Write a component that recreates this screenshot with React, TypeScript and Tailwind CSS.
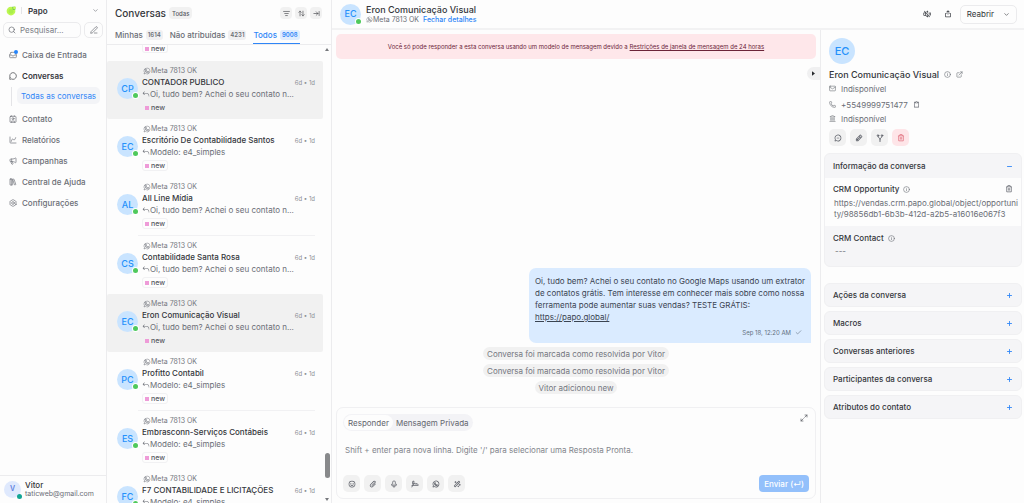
import type { ReactNode } from 'react';
import {
  ArrowRightToLine,
  ArrowUpDown,
  Bolt,
  ChartSpline,
  Check,
  ChevronDown,
  Contact,
  ExternalLink,
  Inbox,
  Info,
  Landmark,
  LibraryBig,
  ListFilter,
  Mail,
  Maximize2,
  Megaphone,
  MessageCircle,
  Minus,
  PenLine,
  Phone,
  Plus,
  Search,
} from 'lucide-react';
import {
  PiArrowBendUpLeft,
  PiChatCircleDotsBold,
  PiClipboardBold,
  PiExportBold,
  PiMagicWandBold,
  PiMicrophoneBold,
  PiPaperclipBold,
  PiPencilBold,
  PiSignatureBold,
  PiSmileyBold,
  PiSpeakerSlashBold,
  PiTrashBold,
  PiWhatsappLogo,
  PiWhatsappLogoBold,
} from 'react-icons/pi';

type Conversation = {
  initials: string;
  name: string;
  message: string;
  highlighted?: boolean;
  divider?: boolean;
};

const GREETING = 'Oi, tudo bem? Achei o seu contato n...';
const TEMPLATE = 'Modelo: e4_simples';

const conversations: Conversation[] = [
  { initials: 'CP', name: 'CONTADOR PUBLICO', message: GREETING, highlighted: true },
  { initials: 'EC', name: 'Escritório De Contabilidade Santos', message: TEMPLATE },
  { initials: 'AL', name: 'All Line Mídia', message: GREETING, divider: true },
  { initials: 'CS', name: 'Contabilidade Santa Rosa', message: GREETING },
  { initials: 'EC', name: 'Eron Comunicação Visual', message: GREETING, highlighted: true },
  { initials: 'PC', name: 'Profitto Contabil', message: TEMPLATE, divider: true },
  { initials: 'ES', name: 'Embrasconn-Serviços Contábeis', message: TEMPLATE },
  { initials: 'FC', name: 'F7 CONTABILIDADE E LICITAÇÕES', message: TEMPLATE },
];

function Avatar({ initials, online = true, large = false }: { initials: string; online?: boolean; large?: boolean }) {
  return (
    <span
      className={`relative flex shrink-0 items-center justify-center rounded-full bg-[#c9e4ff] font-medium text-[#2591fb] ${
        large ? 'size-[26px] text-[11px]' : 'size-[21px] text-[9px]'
      }`}
    >
      {initials}
      {online && (
        <span className="absolute -right-px bottom-0 flex size-[7px] items-center justify-center rounded-full bg-white">
          <span className="size-[5px] rounded-full bg-[#4fc95c]" />
        </span>
      )}
    </span>
  );
}

function NewLabel() {
  return (
    <span className="flex h-[11px] items-center gap-[2px] rounded-[3px] border border-[#f1f1f3] px-[2px] text-[7px]/[9px] font-medium text-[#55585f]">
      <span className="size-1 bg-[#ee9bd8]" />
      new
    </span>
  );
}

function ConversationRow({ item }: { item: Conversation }) {
  return (
    <li className={item.highlighted ? 'rounded-[2px] bg-[#f1f1f1]' : ''}>
      <a href="#conversa" className="flex h-[58px] pl-[10px]">
        <span className="mt-[17px]">
          <Avatar initials={item.initials} />
        </span>
        <span className="ml-[4px] flex min-w-0 flex-1 flex-col pr-2 pt-[5px]">
          <span className="flex h-[10px] items-center pl-px text-[7px] text-[#74777f]">
            <PiWhatsappLogo className="size-2" />
            Meta 7813 OK
          </span>
          <span className="flex h-3 items-center justify-between">
            <span className="whitespace-nowrap text-[8px] font-medium text-[#34363b]">{item.name}</span>
            <span className="shrink-0 text-[6px] text-[#8d9097]">6d • 1d</span>
          </span>
          <span className="flex h-3 items-center whitespace-nowrap text-[8px] text-[#6b6e76]">
            <PiArrowBendUpLeft className="size-2 shrink-0" />
            {item.message}
          </span>
          <span className="mt-[2px] flex">
            <NewLabel />
          </span>
        </span>
      </a>
      {item.divider && <div className="ml-[31px] mr-2 h-px bg-[#f1f1f3]" />}
    </li>
  );
}

function NavItem({ icon, label, active = false }: { icon: ReactNode; label: string; active?: boolean }) {
  return (
    <a
      href="#nav"
      className={`flex h-[17px] items-center gap-[5px] pl-[5px] text-[8px] ${
        active ? 'font-semibold text-[#34363b]' : 'font-medium text-[#6b6e76]'
      }`}
    >
      {icon}
      {label}
    </a>
  );
}

function Sidebar() {
  return (
    <aside className="flex w-[107px] shrink-0 flex-col border-r border-[#ececee]">
      <div className="flex h-[21px] items-center px-[6px]">
        <svg viewBox="0 0 16 16" className="size-[10px]" role="img" aria-label="Papo">
          <circle cx="8" cy="8" r="7" fill="#bdf751" />
          <circle cx="8" cy="8.500" r="4" fill="#a9ee4b" />
          <path d="M10 1h5v5h-4z" fill="#60b85a" />
          <circle cx="13.500" cy="3" r="2.200" fill="#c4fb52" />
        </svg>
        <span className="ml-[5px] h-[7px] w-px bg-[#e4e4e7]" />
        <button type="button" className="ml-[6px] flex flex-1 items-center justify-between text-[8px] font-semibold text-[#34363b]">
          Papo
          <ChevronDown className="mr-px size-[7px] text-[#6b6e76]" />
        </button>
      </div>
      <div className="mt-px flex gap-[3px] px-[3px]">
        <label className="flex h-4 min-w-0 flex-1 items-center gap-1 rounded-[5px] border border-[#ebebed] px-1 text-[#63666e]">
          <Search className="size-2 shrink-0" />
          <input
            aria-label="Pesquisar"
            placeholder="Pesquisar..."
            className="w-full min-w-0 text-[8px] outline-none placeholder:text-[#7b7e86]"
          />
        </label>
        <button type="button" aria-label="Nova conversa" className="flex h-4 w-[19px] items-center justify-center rounded-[5px] border border-[#ebebed] text-[#63666e]">
          <PenLine className="size-2" />
        </button>
      </div>
      <nav className="mt-2 flex flex-1 flex-col gap-1 px-1">
        <NavItem
          label="Caixa de Entrada"
          icon={
            <span className="relative">
              <Inbox className="size-2" />
              <span className="absolute -right-px -top-px size-1 rounded-full bg-[#2384fa]" />
            </span>
          }
        />
        <div className="flex flex-col">
          <NavItem label="Conversas" active icon={<MessageCircle className="size-2" />} />
          <div className="ml-[7px] mt-[3px] flex h-[19px] items-start border-l border-[#e4e4e7] pl-[5px]">
            <a href="#todas" className="flex h-[17px] items-center whitespace-nowrap rounded-[5px] bg-[#f3f4f7] px-1 text-[8px] text-[#2f86f7]">
              Todas as conversas
            </a>
          </div>
        </div>
        <NavItem label="Contato" icon={<Contact className="size-2" />} />
        <NavItem label="Relatórios" icon={<ChartSpline className="size-2" />} />
        <NavItem label="Campanhas" icon={<Megaphone className="size-2" />} />
        <NavItem label="Central de Ajuda" icon={<LibraryBig className="size-2" />} />
        <NavItem label="Configurações" icon={<Bolt className="size-2" />} />
      </nav>
      <button type="button" className="flex h-7 items-center gap-[4px] border-t border-[#ececee] pl-1 text-left">
        <span className="relative flex size-[17px] items-center justify-center rounded-full bg-[#dfe9fd] text-[7px] font-semibold text-[#5b7fe0]">
          V
          <span className="absolute -bottom-px -right-px size-[5px] rounded-full bg-[#12a594]" />
        </span>
        <span className="flex flex-col">
          <span className="text-[8px]/[9px] font-medium text-[#34363b]">Vitor</span>
          <span className="text-[7px]/[8px] text-[#6b6e76]">taticweb@gmail.com</span>
        </span>
      </button>
    </aside>
  );
}

function Tab({ label, count, active = false }: { label: string; count: string; active?: boolean }) {
  return (
    <button
      type="button"
      role="tab"
      aria-selected={active}
      className={`flex h-full items-center gap-[3px] border-b text-[8px] font-medium ${
        active ? 'border-[#2f86f7] text-[#2f86f7]' : 'border-transparent text-[#6b6e76]'
      }`}
    >
      {label}
      <span className={`flex h-[10px] items-center rounded-[3px] px-[2px] text-[6px] font-semibold ${active ? 'bg-[#dfedfe]' : 'bg-[#f0f0f2]'}`}>
        {count}
      </span>
    </button>
  );
}

function SquareButton({ label, children, tone = 'plain' }: { label: string; children: ReactNode; tone?: 'plain' | 'danger' }) {
  return (
    <button
      type="button"
      aria-label={label}
      className={`flex size-[17px] items-center justify-center rounded-[5px] ${
        tone === 'danger' ? 'bg-[#fee5e8] text-[#e0707e]' : 'bg-[#f1f1f1] text-[#63666e]'
      }`}
    >
      {children}
    </button>
  );
}

function SmallButton({ label, children }: { label: string; children: ReactNode }) {
  return (
    <button type="button" aria-label={label} className="flex size-3 items-center justify-center rounded-[4px] bg-[#f1f1f1] text-[#34363b]">
      {children}
    </button>
  );
}

function ConversationList() {
  return (
    <section className="flex w-[225px] shrink-0 flex-col border-r border-[#ececee]">
      <header className="flex h-[26px] shrink-0 items-center gap-[3px] pl-2 pr-[9px]">
        <h1 className="text-[10px] font-medium text-[#34363b]">Conversas</h1>
        <span className="flex h-3 items-center rounded-[4px] bg-[#f1f1f1] px-[3px] text-[6px] font-medium text-[#55585f]">Todas</span>
        <div className="ml-auto flex gap-[3px]">
          <SmallButton label="Filtrar">
            <ListFilter className="size-[7px]" />
          </SmallButton>
          <SmallButton label="Ordenar">
            <ArrowUpDown className="size-[7px]" />
          </SmallButton>
          <SmallButton label="Expandir">
            <ArrowRightToLine className="size-[7px]" />
          </SmallButton>
        </div>
      </header>
      <div role="tablist" className="flex h-[19px] shrink-0 gap-[7px] border-b border-[#ececee] pl-2">
        <Tab label="Minhas" count="1614" />
        <Tab label="Não atribuídas" count="4231" />
        <Tab label="Todos" count="9008" active />
      </div>
      <div className="flex min-h-0 flex-1">
        <div className="min-w-0 flex-1 overflow-hidden">
          <div className="flex h-4 items-start pl-[35px]">
            <span className="flex h-2 items-center gap-[2px] rounded-b-[3px] border-x border-b border-[#f1f1f3] px-[2px] text-[7px]/[7px] font-medium text-[#55585f]">
              <span className="size-1 bg-[#ee9bd8]" />
              new
            </span>
          </div>
          <ul>
            {conversations.map((item) => (
              <ConversationRow key={item.name} item={item} />
            ))}
          </ul>
        </div>
        <div aria-hidden="true" className="flex w-2 shrink-0 flex-col items-center pb-[2px] pt-[3px]">
          <svg viewBox="0 0 4 3" className="h-[3px] w-1 fill-[#77797d]">
            <path d="M2 0 4 3H0z" />
          </svg>
          <div className="flex-[402]" />
          <div className="h-[25px] w-[5px] rounded-full bg-[#88898b]" />
          <div className="flex-[20]" />
          <svg viewBox="0 0 4 3" className="h-[3px] w-1 fill-[#77797d]">
            <path d="M0 0h4L2 3z" />
          </svg>
        </div>
      </div>
    </section>
  );
}

function ChatHeader() {
  return (
    <header className="flex h-[30px] shrink-0 items-center border-b-2 border-[#f2f2f3] pl-2 pr-[7px]">
      <Avatar initials="EC" />
      <div className="ml-[5px] flex flex-col">
        <h2 className="text-[9px]/[11px] font-medium text-[#34363b]">Eron Comunicação Visual</h2>
        <div className="flex h-[9px] items-center text-[7px]/[9px] text-[#6b6e76]">
          <PiWhatsappLogo className="size-[7px]" />
          Meta 7813 OK
          <a href="#detalhes" className="ml-1 font-medium text-[#2f86f7]">
            Fechar detalhes
          </a>
        </div>
      </div>
      <div className="ml-auto flex items-center">
        <button type="button" aria-label="Silenciar" className="text-[#44474d]">
          <PiSpeakerSlashBold className="size-2" />
        </button>
        <button type="button" aria-label="Enviar transcrição" className="ml-[13px] text-[#44474d]">
          <PiExportBold className="size-2" />
        </button>
        <div className="ml-2 flex h-[19px] items-center rounded-[5px] border border-[#ebebed] text-[#34363b]">
          <button type="button" className="pl-[6px] pr-2 text-[8px]">
            Reabrir
          </button>
          <button type="button" aria-label="Mais opções" className="pl-px pr-[6px]">
            <ChevronDown className="size-[7px]" />
          </button>
        </div>
      </div>
    </header>
  );
}

function ActivityPill({ children }: { children: ReactNode }) {
  return <p className="flex h-[13px] items-center rounded-full bg-[#f1f1f1] px-1 text-[8px] text-[#74777f]">{children}</p>;
}

function Composer() {
  return (
    <form className="m-1 flex h-[92px] shrink-0 flex-col rounded-[7px] border border-[#f0f0f2] px-[6px] py-[6px]">
      <div className="flex items-start justify-between">
        <div className="flex h-[17px] items-center rounded-full bg-[#f3f3f6] p-px text-[8px] text-[#63666e]">
          <button type="button" className="h-full rounded-full bg-[#fdfdfd] px-1">
            Responder
          </button>
          <button type="button" className="h-full px-[3px]">
            Mensagem Privada
          </button>
        </div>
        <button type="button" aria-label="Expandir editor" className="mr-px text-[#55585f]">
          <Maximize2 className="size-2" />
        </button>
      </div>
      <textarea
        aria-label="Mensagem"
        placeholder="Shift + enter para nova linha. Digite '/' para selecionar uma Resposta Pronta."
        className="mt-[13px] min-h-0 flex-1 resize-none pl-[2px] text-[8px]/[12px] outline-none placeholder:text-[#82858c]"
      />
      <div className="flex items-center justify-between">
        <div className="flex gap-1">
          <SquareButton label="Emoji">
            <PiSmileyBold className="size-2" />
          </SquareButton>
          <SquareButton label="Anexar">
            <PiPaperclipBold className="size-2" />
          </SquareButton>
          <SquareButton label="Gravar áudio">
            <PiMicrophoneBold className="size-2" />
          </SquareButton>
          <SquareButton label="Assinatura">
            <PiSignatureBold className="size-2" />
          </SquareButton>
          <SquareButton label="Modelos do WhatsApp">
            <PiWhatsappLogoBold className="size-2" />
          </SquareButton>
          <SquareButton label="Assistente">
            <PiMagicWandBold className="size-2" />
          </SquareButton>
        </div>
        <button type="button" className="h-[17px] rounded-[4px] bg-[#93c0fb] px-[5px] text-[8px] font-medium text-white">
          Enviar (↵)
        </button>
      </div>
    </form>
  );
}

function Chat() {
  return (
    <main className="flex min-w-0 flex-1 flex-col">
      <div className="mx-1 mt-1 flex h-[25px] shrink-0 items-center justify-center gap-[2px] rounded-[5px] bg-[#fee7ea] text-[6px] text-[#6b2438]">
        <span>Você só pode responder a esta conversa usando um modelo de mensagem devido a</span>
        <a href="#restricoes" className="underline">
          Restrições de janela de mensagem de 24 horas
        </a>
      </div>
      <button
        type="button"
        aria-label="Recolher painel"
        className="mt-2 flex h-[13px] w-[13px] items-center justify-center self-end rounded-l-full bg-[#f0f0f1] text-[#26282c]"
      >
        <svg viewBox="0 0 4 6" className="h-[5px] w-[3px] fill-current">
          <path d="M0 0l4 3-4 3z" />
        </svg>
      </button>
      <div className="flex min-h-0 flex-1 flex-col justify-end pb-[9px]">
        <article className="mr-[9px] flex flex-col self-end rounded-[7px] rounded-br-none bg-[#daebff] px-[6px] pb-[6px] pt-[7px] text-[#3a4452]">
          <p className="whitespace-nowrap text-[8px]/[12px]">
            Oi, tudo bem? Achei o seu contato no Google Maps usando um extrator
            <br />
            de contatos grátis. Tem interesse em conhecer mais sobre como nossa
            <br />
            ferramenta pode aumentar suas vendas? TESTE GRÁTIS:
            <br />
            <a href="#papo" className="underline">
              https://papo.global/
            </a>
          </p>
          <span className="mt-1 flex h-[10px] items-center justify-end gap-1 pr-[3px] text-[6px] text-[#63707f]">
            Sep 18, 12:20 AM
            <Check className="size-[7px]" />
          </span>
        </article>
        <div className="mt-1 flex flex-col items-center gap-1">
          <ActivityPill>Conversa foi marcada como resolvida por Vitor</ActivityPill>
          <ActivityPill>Conversa foi marcada como resolvida por Vitor</ActivityPill>
          <ActivityPill>Vitor adicionou new</ActivityPill>
        </div>
      </div>
      <Composer />
    </main>
  );
}

function Section({ title }: { title: string }) {
  return (
    <button type="button" className="flex h-6 items-center justify-between rounded-[6px] border border-[#f0f0f2] bg-[#f5f5f7] px-2 text-[8px] font-medium text-[#34363b]">
      {title}
      <Plus className="size-[7px] text-[#2f86f7]" strokeWidth={3} />
    </button>
  );
}

function MergeContactsIcon() {
  return (
    <svg viewBox="0 0 16 16" className="size-2 fill-none stroke-current" strokeWidth="2" strokeLinecap="round">
      <circle cx="4" cy="3" r="1.500" />
      <circle cx="12" cy="3" r="1.500" />
      <path d="M4 5c0 3 4 2.500 4 5.500V15M12 5c0 3-4 2.500-4 5.500" />
    </svg>
  );
}

function ContactPanel() {
  return (
    <aside className="flex w-[204px] shrink-0 flex-col border-l border-[#ececee] pl-[3px] pr-[2px] pt-2">
      <div className="flex flex-col pl-[5px]">
        <Avatar initials="EC" large online={false} />
        <div className="mt-1 flex h-[13px] items-center gap-[5px] text-[#6b6e76]">
          <h3 className="text-[9px] font-medium text-[#34363b]">Eron Comunicação Visual</h3>
          <Info className="size-[7px]" />
          <ExternalLink className="size-[7px]" />
        </div>
        <div className="mt-px flex h-[13px] items-center gap-[5px] text-[8px] text-[#6b6e76]">
          <Mail className="size-[7px]" />
          Indisponível
        </div>
        <div className="mt-[2px] flex h-[15px] items-center gap-[5px] text-[8px] text-[#6b6e76]">
          <Phone className="size-[7px]" />
          +5549999751477
          <button type="button" aria-label="Copiar telefone">
            <PiClipboardBold className="size-[7px]" />
          </button>
        </div>
        <div className="flex h-[13px] items-center gap-[5px] text-[8px] text-[#6b6e76]">
          <Landmark className="size-[7px]" />
          Indisponível
        </div>
        <div className="mt-1 flex gap-1">
          <SquareButton label="Nova mensagem">
            <PiChatCircleDotsBold className="size-2" />
          </SquareButton>
          <SquareButton label="Editar contato">
            <PiPencilBold className="size-2" />
          </SquareButton>
          <SquareButton label="Mesclar contato">
            <MergeContactsIcon />
          </SquareButton>
          <SquareButton label="Excluir contato" tone="danger">
            <PiTrashBold className="size-2" />
          </SquareButton>
        </div>
      </div>
      <section className="mt-[7px] overflow-hidden rounded-[6px] border border-[#f0f0f2] bg-[#f5f5f7] text-[8px]">
        <button type="button" className="flex h-6 w-full items-center justify-between px-2 font-medium text-[#34363b]">
          Informação da conversa
          <Minus className="size-[7px] text-[#2f86f7]" strokeWidth={3} />
        </button>
        <div className="h-12 bg-[#fdfdfd] pl-2 pt-[5px]">
          <div className="flex h-3 items-center gap-1 pr-2 text-[#6b6e76]">
            <h4 className="font-medium text-[#34363b]">CRM Opportunity</h4>
            <Info className="size-[7px]" />
            <button type="button" aria-label="Excluir atributo" className="ml-auto">
              <PiTrashBold className="size-2" />
            </button>
          </div>
          <p className="mt-[3px] whitespace-nowrap pl-px text-[8px]/[11px] text-[#6b6e76]">
            https://vendas.crm.papo.global/object/opportuni
            <br />
            ty/98856db1-6b3b-412d-a2b5-a16016e067f3
          </p>
        </div>
        <div className="h-10 px-2 pt-[6px]">
          <div className="flex h-3 items-center gap-1 text-[#6b6e76]">
            <h4 className="font-medium text-[#34363b]">CRM Contact</h4>
            <Info className="size-[7px]" />
          </div>
          <p className="mt-[2px] pl-[2px] text-[8px]/[11px] text-[#6b6e76]">---</p>
        </div>
      </section>
      <div className="mt-4 flex flex-col gap-1">
        <Section title="Ações da conversa" />
        <Section title="Macros" />
        <Section title="Conversas anteriores" />
        <Section title="Participantes da conversa" />
        <Section title="Atributos do contato" />
      </div>
    </aside>
  );
}

export default function App() {
  return (
    <div className="flex h-screen overflow-hidden bg-[#fdfdfd] font-[Inter,sans-serif] text-[#34363b]">
      <Sidebar />
      <ConversationList />
      <div className="flex min-w-0 flex-1 flex-col">
        <ChatHeader />
        <div className="flex min-h-0 flex-1">
          <Chat />
          <ContactPanel />
        </div>
      </div>
    </div>
  );
}
